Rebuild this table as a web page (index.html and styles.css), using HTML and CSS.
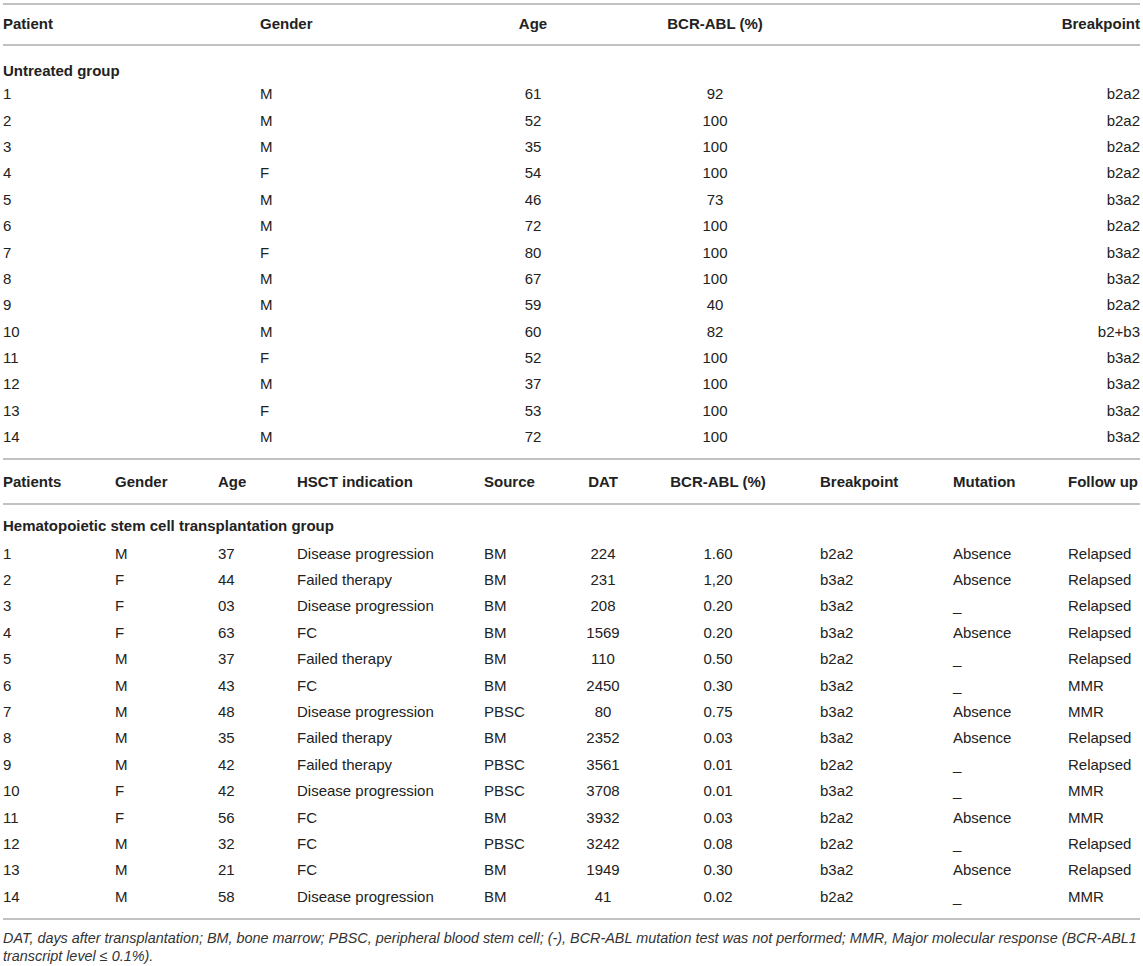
FILE: index.html
```html
<!DOCTYPE html>
<html lang="en">
<head>
  <meta charset="UTF-8" />
  <title>BCR-ABL patients</title>
  <link rel="stylesheet" href="styles.css">
</head>
<body>
  <div class="wrap">
    <!-- Untreated group -->
    <table class="data untreated">
      <colgroup>
        <col style="width:257px"><col style="width:180px"><col style="width:186px"><col style="width:178px"><col>
      </colgroup>
      <thead>
        <tr>
          <th>Patient</th><th>Gender</th><th class="c">Age</th><th class="c">BCR-ABL (%)</th><th class="r">Breakpoint</th>
        </tr>
      </thead>
      <tbody>
        <tr class="group"><td colspan="5">Untreated group</td></tr>
        <tr><td>1</td><td>M</td><td class="c">61</td><td class="c">92</td><td class="r">b2a2</td></tr>
        <tr><td>2</td><td>M</td><td class="c">52</td><td class="c">100</td><td class="r">b2a2</td></tr>
        <tr><td>3</td><td>M</td><td class="c">35</td><td class="c">100</td><td class="r">b2a2</td></tr>
        <tr><td>4</td><td>F</td><td class="c">54</td><td class="c">100</td><td class="r">b2a2</td></tr>
        <tr><td>5</td><td>M</td><td class="c">46</td><td class="c">73</td><td class="r">b3a2</td></tr>
        <tr><td>6</td><td>M</td><td class="c">72</td><td class="c">100</td><td class="r">b2a2</td></tr>
        <tr><td>7</td><td>F</td><td class="c">80</td><td class="c">100</td><td class="r">b3a2</td></tr>
        <tr><td>8</td><td>M</td><td class="c">67</td><td class="c">100</td><td class="r">b3a2</td></tr>
        <tr><td>9</td><td>M</td><td class="c">59</td><td class="c">40</td><td class="r">b2a2</td></tr>
        <tr><td>10</td><td>M</td><td class="c">60</td><td class="c">82</td><td class="r">b2+b3</td></tr>
        <tr><td>11</td><td>F</td><td class="c">52</td><td class="c">100</td><td class="r">b3a2</td></tr>
        <tr><td>12</td><td>M</td><td class="c">37</td><td class="c">100</td><td class="r">b3a2</td></tr>
        <tr><td>13</td><td>F</td><td class="c">53</td><td class="c">100</td><td class="r">b3a2</td></tr>
        <tr><td>14</td><td>M</td><td class="c">72</td><td class="c">100</td><td class="r">b3a2</td></tr>
      </tbody>
    </table>

    <!-- HSCT group -->
    <table class="data hsct">
      <colgroup>
        <col style="width:112px"><col style="width:103px"><col style="width:79px"><col style="width:187px"><col style="width:76px">
        <col style="width:86px"><col style="width:144px"><col style="width:163px"><col style="width:115px"><col>
      </colgroup>
      <thead>
        <tr>
          <th>Patients</th><th>Gender</th><th>Age</th><th>HSCT indication</th><th>Source</th>
          <th class="c">DAT</th><th class="c">BCR-ABL (%)</th><th class="bp">Breakpoint</th><th>Mutation</th><th>Follow up</th>
        </tr>
      </thead>
      <tbody>
        <tr class="group"><td colspan="10">Hematopoietic stem cell transplantation group</td></tr>
        <tr><td>1</td><td>M</td><td>37</td><td>Disease progression</td><td>BM</td><td class="c">224</td><td class="c">1.60</td><td class="bp">b2a2</td><td>Absence</td><td>Relapsed</td></tr>
        <tr><td>2</td><td>F</td><td>44</td><td>Failed therapy</td><td>BM</td><td class="c">231</td><td class="c">1,20</td><td class="bp">b3a2</td><td>Absence</td><td>Relapsed</td></tr>
        <tr><td>3</td><td>F</td><td>03</td><td>Disease progression</td><td>BM</td><td class="c">208</td><td class="c">0.20</td><td class="bp">b3a2</td><td>_</td><td>Relapsed</td></tr>
        <tr><td>4</td><td>F</td><td>63</td><td>FC</td><td>BM</td><td class="c">1569</td><td class="c">0.20</td><td class="bp">b3a2</td><td>Absence</td><td>Relapsed</td></tr>
        <tr><td>5</td><td>M</td><td>37</td><td>Failed therapy</td><td>BM</td><td class="c">110</td><td class="c">0.50</td><td class="bp">b2a2</td><td>_</td><td>Relapsed</td></tr>
        <tr><td>6</td><td>M</td><td>43</td><td>FC</td><td>BM</td><td class="c">2450</td><td class="c">0.30</td><td class="bp">b3a2</td><td>_</td><td>MMR</td></tr>
        <tr><td>7</td><td>M</td><td>48</td><td>Disease progression</td><td>PBSC</td><td class="c">80</td><td class="c">0.75</td><td class="bp">b3a2</td><td>Absence</td><td>MMR</td></tr>
        <tr><td>8</td><td>M</td><td>35</td><td>Failed therapy</td><td>BM</td><td class="c">2352</td><td class="c">0.03</td><td class="bp">b3a2</td><td>Absence</td><td>Relapsed</td></tr>
        <tr><td>9</td><td>M</td><td>42</td><td>Failed therapy</td><td>PBSC</td><td class="c">3561</td><td class="c">0.01</td><td class="bp">b2a2</td><td>_</td><td>Relapsed</td></tr>
        <tr><td>10</td><td>F</td><td>42</td><td>Disease progression</td><td>PBSC</td><td class="c">3708</td><td class="c">0.01</td><td class="bp">b3a2</td><td>_</td><td>MMR</td></tr>
        <tr><td>11</td><td>F</td><td>56</td><td>FC</td><td>BM</td><td class="c">3932</td><td class="c">0.03</td><td class="bp">b2a2</td><td>Absence</td><td>MMR</td></tr>
        <tr><td>12</td><td>M</td><td>32</td><td>FC</td><td>PBSC</td><td class="c">3242</td><td class="c">0.08</td><td class="bp">b2a2</td><td>_</td><td>Relapsed</td></tr>
        <tr><td>13</td><td>M</td><td>21</td><td>FC</td><td>BM</td><td class="c">1949</td><td class="c">0.30</td><td class="bp">b3a2</td><td>Absence</td><td>Relapsed</td></tr>
        <tr><td>14</td><td>M</td><td>58</td><td>Disease progression</td><td>BM</td><td class="c">41</td><td class="c">0.02</td><td class="bp">b2a2</td><td>_</td><td>MMR</td></tr>
      </tbody>
    </table>

    <p class="note">DAT, days after transplantation; BM, bone marrow; PBSC, peripheral blood stem cell; (-), BCR-ABL mutation test was not performed; MMR, Major molecular response (BCR-ABL1 transcript level ≤ 0.1%).</p>
  </div>
</body>
</html>
```

FILE: styles.css
```css
body { margin: 0; background: #fff; color: #222; font-family: "Liberation Sans", Arial, sans-serif; font-size: 15px; }
.wrap { padding: 3px 3px 0 3px; width: 1137px; }

/* Tables */
.data { width: 1137px; border-collapse: collapse; table-layout: fixed; border-bottom: 2px solid #c2c2c2; }
.data th, .data td { padding: 0; text-align: left; white-space: nowrap; line-height: 20px; }
.data th { font-weight: bold; height: 37px; vertical-align: middle; padding-bottom: 2px; }
.data td { height: 26.4px; vertical-align: middle; }
.data thead tr { border-bottom: 2px solid #c2c2c2; }
.untreated { border-top: 2px solid #c2c2c2; }
.data tbody tr:last-child td { padding-bottom: 8px; }
.group td { font-weight: bold; height: 35px; vertical-align: bottom; }
.hsct th { height: 43px; padding-bottom: 0; }
.hsct .group td { padding-bottom: 4px; height: 31px; }

.c { text-align: center !important; }
.r { text-align: right !important; }
.bp { padding-left: 30px !important; }

/* Footnote */
.note { margin: 0; padding-top: 9px; font-style: italic; font-size: 14.4px; line-height: 18px; color: #333; }
```
